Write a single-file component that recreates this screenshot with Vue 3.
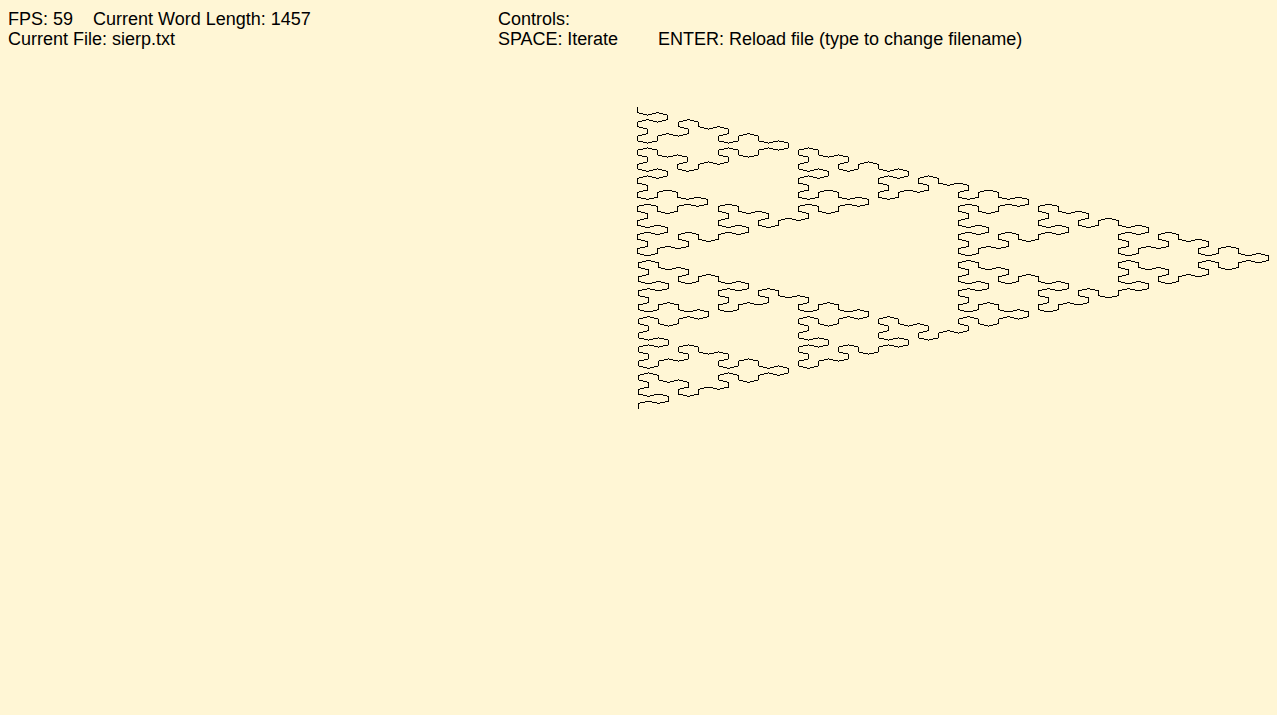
<script setup>
const UNIT_X = 10
const UNIT_Y = 4.69
const ORIGIN_X = 638
const ORIGIN_Y = 107.97

// Expand the arrowhead grammar: A -> B-A-B, B -> A+B+A
let word = 'A'
for (let i = 0; i < 6; i++) {
  word = word.replace(/[AB]/g, (c) => (c === 'A' ? 'B-A-B' : 'A+B+A'))
}

const headings = [[0, 1], [1, 0.5], [1, -0.5], [0, -1], [-1, -0.5], [-1, 0.5]]

function trace() {
  const points = [[0, 0]]
  let dir = 0
  let x = 0
  let y = 0
  for (const c of word) {
    if (c === '-') dir = (dir + 5) % 6
    else if (c === '+') dir = (dir + 1) % 6
    else {
      x += headings[dir][0]
      y += headings[dir][1]
      points.push([x, y])
    }
  }
  return points
}

function truncatesLeft(x, i) {
  if (i > 135) return false
  if (x <= 3) return true
  if (i > 54 && i <= 81) return x <= 5
  return i > 81 && i <= 108
}

function place([x, y], i) {
  return [ORIGIN_X + x * UNIT_X - (truncatesLeft(x, i) ? 1 : 0), ORIGIN_Y + y * UNIT_Y]
}

const pts = trace().map(place)
const pixels = new Set()
for (let i = 1; i < pts.length; i++) {
  const [x0, y0] = pts[i - 1]
  const [x1, y1] = pts[i]
  if (x0 === x1) {
    const top = Math.floor(Math.min(y0, y1))
    const bottom = Math.floor(Math.max(y0, y1))
    for (let y = top; y <= bottom; y++) pixels.add(`M${x0} ${y}h1v1h-1z`)
  } else {
    const n = Math.abs(x1 - x0)
    for (let k = 0; k <= n; k++) {
      const x = x0 + Math.sign(x1 - x0) * k
      pixels.add(`M${x} ${Math.floor(y0 + ((y1 - y0) * k) / n)}h1v1h-1z`)
    }
  }
}
const curve = [...pixels].join('')
const length = word.length
</script>

<template>
  <main class="screen">
    <svg class="curve" width="1277" height="715" shape-rendering="crispEdges"><path :d="curve" /></svg>
    <header class="hud">
      <div class="stats">
        <div class="line first"><span>FPS: 59</span><span>Current Word Length: {{ length }}</span></div>
        <div class="line"><span>Current File: sierp.txt</span></div>
      </div>
      <div class="controls">
        <div class="line"><span>Controls:</span></div>
        <div class="line"><span class="iterate">SPACE: Iterate</span><span>ENTER: Reload file (type to change filename)</span></div>
      </div>
    </header>
  </main>
</template>

<style>
body { margin: 0; background: #fff6d5; }
</style>

<style scoped>
.screen {
  position: relative;
  height: 715px;
  overflow: hidden;
  background: #fff6d5;
  color: #000;
  font: 18px/20px "Liberation Sans", Arial, sans-serif;
  white-space: nowrap;
}
.curve { position: absolute; inset: 0; }
.hud { display: flex; padding: 9px 8px; }
.stats { width: 490px; }
.line { display: flex; }
.first { gap: 20px; }
.iterate { width: 160px; letter-spacing: -0.06px; }
</style>
